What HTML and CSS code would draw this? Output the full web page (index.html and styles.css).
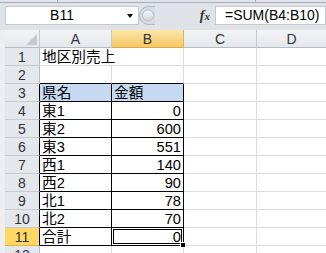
FILE: index.html
```html
<!DOCTYPE html>
<html lang="ja">
<head>
  <meta charset="UTF-8" />
  <title>Book1</title>
  <link rel="stylesheet" href="styles.css">
</head>
<body>
  <div class="ribbon-edge"><span class="t1"></span><span class="t2"></span></div>
  <div class="formula-bar">
    <div class="name-box">
      <span class="name">B11</span>
      <span class="drop"><i class="arrow"></i></span>
    </div>
    <div class="fx-area">
      <svg class="knob" width="16" height="19" viewBox="0 0 16 19">
        <defs>
          <linearGradient id="kg" x1="0" y1="0" x2="0" y2="1">
            <stop offset="0" stop-color="#f7f8f9"/>
            <stop offset="1" stop-color="#cfd4da"/>
          </linearGradient>
        </defs>
        <path d="M16 0.5 H9.5 A9 9 0 0 0 9.5 18.5 H16" fill="#d6dbe1" stroke="#b4bbc4"/>
        <circle cx="9" cy="9.5" r="5.5" fill="url(#kg)" stroke="#b9c0c8"/>
      </svg>
      <span class="fx"><i>f</i><i class="x">x</i></span>
    </div>
    <div class="formula">=SUM(B4:B10)</div>
  </div>

  <div class="sheet-wrap">
    <table class="sheet">
      <tr class="head">
        <th class="rh corner"><i class="tri"></i></th>
        <th class="ca">A</th>
        <th class="cb active">B</th>
        <th class="cc">C</th>
        <th class="cd">D</th>
      </tr>
      <tr><th class="rh">1</th><td colspan="2">地区別売上</td><td></td><td></td></tr>
      <tr><th class="rh">2</th><td class="top"></td><td class="top"></td><td></td><td></td></tr>
      <tr><th class="rh box">3</th><td class="bx fill">県名</td><td class="bx fill">金額</td><td></td><td></td></tr>
      <tr><th class="rh box">4</th><td class="bx">東1</td><td class="bx num">0</td><td></td><td></td></tr>
      <tr><th class="rh box">5</th><td class="bx">東2</td><td class="bx num">600</td><td></td><td></td></tr>
      <tr><th class="rh box">6</th><td class="bx">東3</td><td class="bx num">551</td><td></td><td></td></tr>
      <tr><th class="rh box">7</th><td class="bx">西1</td><td class="bx num">140</td><td></td><td></td></tr>
      <tr><th class="rh box">8</th><td class="bx">西2</td><td class="bx num">90</td><td></td><td></td></tr>
      <tr><th class="rh box">9</th><td class="bx">北1</td><td class="bx num">78</td><td></td><td></td></tr>
      <tr><th class="rh box">10</th><td class="bx">北2</td><td class="bx num">70</td><td></td><td></td></tr>
      <tr><th class="rh box active">11</th><td class="bx">合計</td><td class="bx num selected">0<span class="handle"></span></td><td></td><td></td></tr>
      <tr><th class="rh">12</th><td></td><td></td><td></td><td></td></tr>
    </table>
  </div>
</body>
</html>
```

FILE: styles.css
```css
* {
  box-sizing: border-box;
}
body {
  margin: 0;
  width: 326px;
  height: 253px;
  overflow: hidden;
  background-color: #dfe3e8;
  font-family: "Liberation Sans", "Noto Sans CJK JP", sans-serif;
  color: #000;
}

/* ribbon bottom edge */
.ribbon-edge {
  display: flex;
  height: 3px;
  border-bottom: 1px solid #a9b0ba;
}
.ribbon-edge span {
  width: 1px;
  background-color: #a9b0ba;
}
.ribbon-edge .t1 {
  margin-left: 57px;
}
.ribbon-edge .t2 {
  margin-left: 197px;
}

/* name box + formula */
.formula-bar {
  display: flex;
  height: 27px;
  padding: 3px 0 5px 5px;
}
.name-box {
  display: flex;
  align-items: center;
  width: 134px;
  background-color: #fff;
  border: 1px solid #c4cad2;
}
.name {
  flex: 1;
  text-align: center;
  font-size: 14px;
  line-height: 17px;
}
.drop {
  width: 20px;
  display: flex;
  justify-content: center;
  padding-left: 3px;
}
.arrow {
  width: 0;
  height: 0;
  border-left: 3px solid transparent;
  border-right: 3px solid transparent;
  border-top: 4px solid #000;
}
.fx-area {
  display: flex;
  align-items: center;
  width: 76px;
}
.knob {
  display: block;
}
.fx {
  margin-left: auto;
  margin-right: 5px;
  font-family: "Liberation Serif", serif;
  font-weight: bold;
  font-size: 14px;
  color: #333;
}
.fx .x {
  font-size: 11px;
}
.formula {
  flex: 1;
  background-color: #fff;
  border: 1px solid #c4cad2;
  padding-left: 9px;
  font-size: 14px;
  line-height: 17px;
  white-space: nowrap;
}

/* sheet */
.sheet-wrap {
  padding-left: 5px;
  background-color: #eceef1;
}
.sheet {
  table-layout: fixed;
  border-collapse: separate;
  border-spacing: 0;
  width: 322px;
  background-color: #fff;
}
tr {
  height: 18px;
}
th, td {
  padding: 1px 0 0 0;
  line-height: 16px;
  font-size: 14.67px;
  font-weight: normal;
  white-space: nowrap;
  overflow: visible;
  border-right: 1px solid #dadcdd;
  border-bottom: 1px solid #dadcdd;
}
td {
  padding-left: 2px;
  text-align: left;
  vertical-align: bottom;
}
.head th {
  width: 72px;
  color: #333;
  font-size: 14px;
  background: linear-gradient(#f3f4f6, #e4e7eb);
  border-right: 1px solid #c3c8cf;
  border-bottom: 1px solid #b6bcc4;
}
.head .corner {
  width: 35px;
  position: relative;
}
.head .cc {
  width: 73px;
}
.head .cd {
  width: 70px;
}
.head .active {
  background: linear-gradient(#fbe6a9, #f5c866);
  border-bottom-color: #e0a844;
  border-right-color: #e0b45a;
}
.tri {
  position: absolute;
  right: 2px;
  bottom: 2px;
  width: 0;
  height: 0;
  border-left: 11px solid transparent;
  border-bottom: 11px solid #c4c9cf;
}
.rh {
  color: #333;
  font-size: 14px;
  text-align: center;
  background-color: #e4e7eb;
  border-right: 1px solid #b6bcc4;
  border-bottom: 1px solid #c7ccd2;
}
.rh.box {
  border-right-color: #000;
}
.rh.active {
  background-color: #ffd763;
  border-bottom-color: #e3b445;
}
.top {
  border-bottom-color: #000;
}
.bx {
  border-right-color: #000;
  border-bottom-color: #000;
}
.fill {
  background-color: #c5d9f1;
}
.num {
  text-align: right;
  padding-left: 0;
  padding-right: 2px;
}
.selected {
  position: relative;
}
.selected::after {
  content: "";
  position: absolute;
  left: 1px;
  top: 1px;
  right: 1px;
  bottom: 1px;
  border: 1px solid #000;
}
.handle {
  position: absolute;
  right: -3px;
  bottom: -3px;
  width: 6px;
  height: 6px;
  background-color: #000;
  border: 1px solid #fff;
  z-index: 1;
}
```
